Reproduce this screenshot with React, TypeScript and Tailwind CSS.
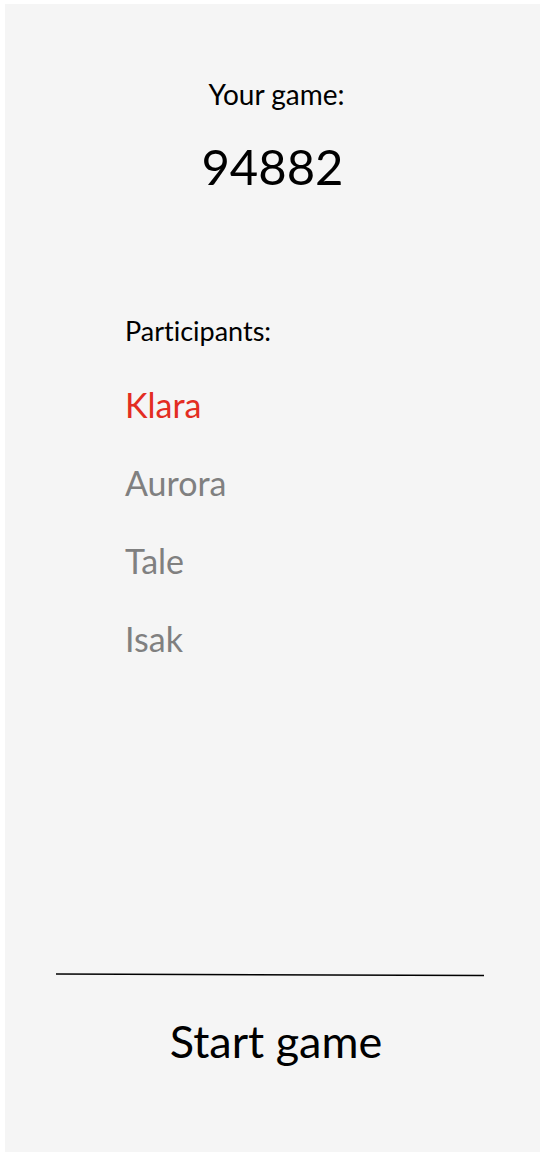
const participants = [
  { name: "Klara", color: "text-[#e32d22]" },
  { name: "Aurora", color: "text-[#808080]" },
  { name: "Tale", color: "text-[#808080]" },
  { name: "Isak", color: "text-[#808080]" },
];

export default function App() {
  return (
    <div className="flex min-h-screen flex-col bg-white pt-1 pr-1.5 pl-[5px] font-['Lato',sans-serif] text-black [font-variant-ligatures:none]">
      <main className="flex grow flex-col bg-[#f5f5f5]">
        <header className="flex flex-col items-center pt-[70px]">
          <h1 className="pl-2 text-[28px] leading-10">Your game:</h1>
          <p className="mt-6 text-[49px] leading-14">94882</p>
        </header>
        <section className="mt-[117px] px-30">
          <h2 className="text-[27px] leading-10">Participants:</h2>
          <ul className="mt-[30px] flex flex-col gap-[30px]">
            {participants.map((p) => (
              <li key={p.name} className={`text-[34px] leading-12 ${p.color}`}>
                {p.name}
              </li>
            ))}
          </ul>
        </section>
        <footer className="mt-auto flex flex-col items-center pr-14 pb-[83px] pl-[51px]">
          <svg className="h-1 w-full" viewBox="0 0 428 4" preserveAspectRatio="none" aria-hidden="true">
            <path d="M0 1L428 2.5" stroke="black" strokeWidth="1.5" />
          </svg>
          <button type="button" className="mt-9 ml-3 text-[45px] leading-14 whitespace-nowrap">
            Start game
          </button>
        </footer>
      </main>
    </div>
  );
}
